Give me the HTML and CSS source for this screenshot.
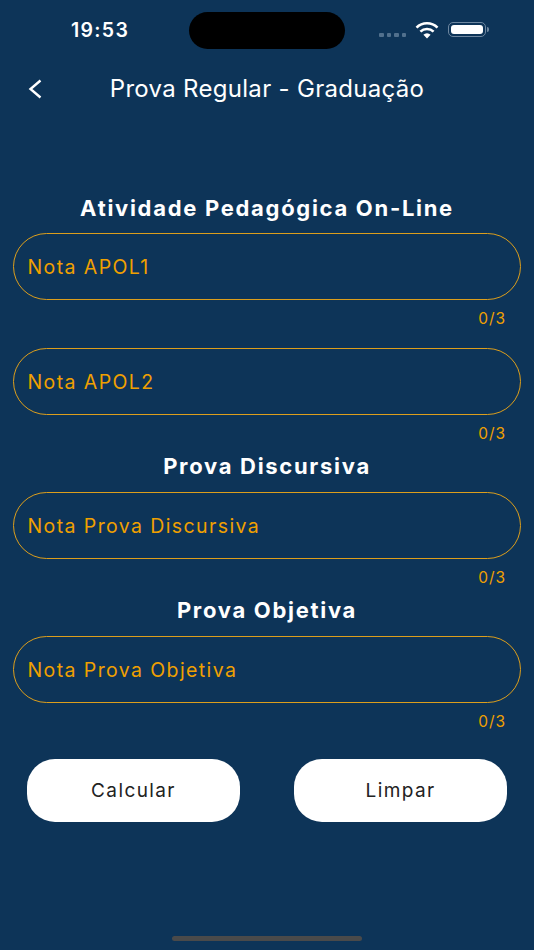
FILE: index.html
```html
<!DOCTYPE html>
<html lang="pt-BR">
<head>
    <meta charset="UTF-8">
    <meta name="viewport" content="width=device-width, initial-scale=1.0">
    <title>Prova Regular - Graduação</title>
    <link rel="stylesheet" href="styles.css">
</head>
<body>
    <div class="screen">
        <div class="status-bar">
            <span class="time">19:53</span>
            <div class="island"></div>
            <div class="status-icons">
                <div class="signal"><i></i><i></i><i></i><i></i></div>
                <svg class="wifi" width="24" height="18" viewBox="0 0 24 18">
                    <path d="M1.500 6.600a15 15 0 0 1 21 0" fill="none" stroke="#fff" stroke-width="2.600"/>
                    <path d="M5.400 10.600a9.500 9.500 0 0 1 13.200 0" fill="none" stroke="#fff" stroke-width="2.600"/>
                    <path d="M12 17.400l-3.600-3.700a5 5 0 0 1 7.200 0z" fill="#fff"/>
                </svg>
                <div class="battery"><div class="battery-fill"></div></div>
                <div class="battery-tip"></div>
            </div>
        </div>

        <div class="nav-bar">
            <svg class="back" width="16" height="22" viewBox="0 0 16 22">
                <path d="M13.500 2.500L3.500 11l10 8.500" fill="none" stroke="#fff" stroke-width="2.400"/>
            </svg>
            <h1 class="nav-title">Prova Regular - Graduação</h1>
        </div>

        <main class="form">
            <h2 class="section-title first">Atividade Pedagógica On-Line</h2>
            <div class="field top">
                <div class="input">Nota APOL1</div>
                <div class="counter">0/3</div>
            </div>
            <div class="field second">
                <div class="input">Nota APOL2</div>
                <div class="counter">0/3</div>
            </div>
            <h2 class="section-title">Prova Discursiva</h2>
            <div class="field">
                <div class="input">Nota Prova Discursiva</div>
                <div class="counter">0/3</div>
            </div>
            <h2 class="section-title">Prova Objetiva</h2>
            <div class="field">
                <div class="input">Nota Prova Objetiva</div>
                <div class="counter">0/3</div>
            </div>
            <div class="buttons">
                <button class="btn">Calcular</button>
                <button class="btn">Limpar</button>
            </div>
        </main>

        <div class="home-bar"></div>
    </div>
</body>
</html>
```

FILE: styles.css
```css
* {
    box-sizing: border-box;
}
body {
    margin: 0;
    background-color: #0d3458;
    font-family: "Inter", "Liberation Sans", sans-serif;
}
.screen {
    position: relative;
    display: flex;
    flex-direction: column;
    width: 534px;
    height: 950px;
    overflow: hidden;
    background-color: #0d3458;
}
.status-bar {
    display: flex;
    justify-content: space-between;
    align-items: center;
    height: 37px;
    margin-top: 12px;
    padding: 0 45px 0 71px;
}
.time {
    color: #fff;
    font-size: 19.500px;
    font-weight: 600;
    letter-spacing: 1.300px;
    margin-top: -1px;
}
.island {
    position: absolute;
    top: 12px;
    left: 189px;
    width: 156px;
    height: 37px;
    border-radius: 19px;
    background-color: #000;
}
.status-icons {
    display: flex;
    align-items: center;
}
.signal {
    display: flex;
    gap: 3px;
    margin: 8px 9px 0 0;
}
.signal i {
    width: 4.500px;
    height: 4px;
    border-radius: 1px;
    background-color: #51708d;
}
.wifi {
    margin: -2px 9px 0 0;
}
.battery {
    width: 38px;
    height: 15px;
    padding: 2px;
    border: 1.500px solid #6e87a0;
    border-radius: 5px;
    margin-top: -2px;
}
.battery-fill {
    height: 100%;
    border-radius: 3px;
    background-color: #fff;
}
.battery-tip {
    width: 2px;
    height: 5px;
    margin: -2px 0 0 1px;
    border-radius: 0 2px 2px 0;
    background-color: #6e87a0;
}
.nav-bar {
    display: flex;
    align-items: center;
    justify-content: center;
    position: relative;
    height: 40px;
    margin-top: 19px;
}
.back {
    position: absolute;
    left: 27px;
    top: 10px;
}
.nav-title {
    margin: 0;
    color: #fff;
    font-size: 24px;
    font-weight: 400;
    letter-spacing: 0.300px;
}
.form {
    display: flex;
    flex-direction: column;
    padding: 0 13px;
}
.section-title {
    margin: 0;
    height: 25px;
    line-height: 25px;
    text-align: center;
    color: #fff;
    font-size: 22px;
    font-weight: 700;
    letter-spacing: 1.700px;
}
.section-title.first {
    margin-top: 88px;
}
.field {
    margin-top: 13px;
    margin-bottom: 11px;
}
.field.top {
    margin-top: 12px;
}
.field.second {
    margin-top: 9px;
}
.input {
    display: flex;
    align-items: center;
    width: 508px;
    height: 67px;
    padding-left: 13.500px;
    border: 1px solid #dc9e1c;
    border-radius: 34px;
    color: #f0a000;
    font-size: 19.500px;
    letter-spacing: 1.400px;
}
.counter {
    height: 18px;
    line-height: 18px;
    margin-top: 10px;
    padding-right: 15px;
    text-align: right;
    color: #f0a000;
    font-size: 15.500px;
    letter-spacing: 0.900px;
}
.buttons {
    display: flex;
    justify-content: space-between;
    padding: 0 14px;
    margin-top: 17px;
}
.btn {
    width: 213px;
    height: 63px;
    border: none;
    border-radius: 28px;
    background-color: #fff;
    color: #222;
    font-family: inherit;
    font-size: 19px;
    letter-spacing: 1.400px;
}
.home-bar {
    position: absolute;
    left: 172px;
    bottom: 9px;
    width: 190px;
    height: 5px;
    border-radius: 3px;
    background-color: #4a4a4a;
}
```
